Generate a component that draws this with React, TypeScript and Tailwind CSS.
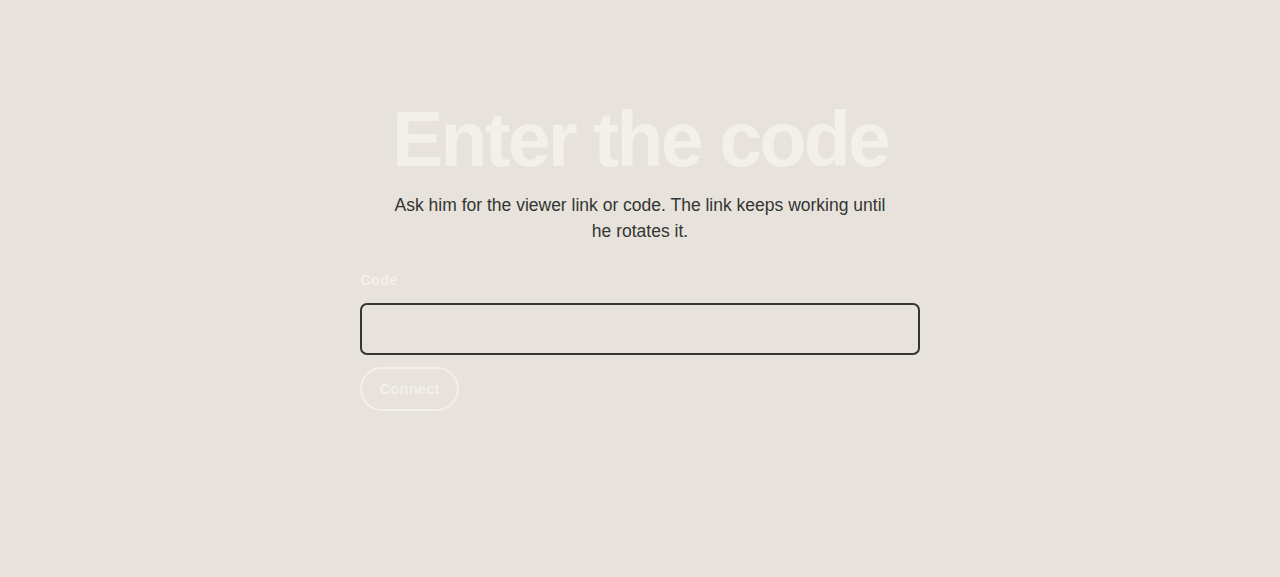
import React from "react";

export default function App() {
  return (
    <div className="min-h-[577px] w-full bg-[#e7e2db] flex justify-center" style={{ fontFamily: '"Liberation Sans", Arial, sans-serif' }}>
      <div className="w-[560px] pt-[96px] flex flex-col">
        <h1 className="text-center text-[77px] leading-[86px] font-bold tracking-[-0.036em] text-[#f3efea]">Enter the code</h1>
        <p className="mx-auto mt-[10px] max-w-[500px] text-center text-[17.5px] leading-[26px] text-[#333632]">
          Ask him for the viewer link or code. The link keeps working until he rotates it.
        </p>
        <label className="mt-[26px] text-[15px] leading-[20px] font-bold text-[#f3efea]">Code</label>
        <input className="mt-[13px] h-[52px] w-full rounded-[7px] border-2 border-[#333632] bg-transparent px-3 outline-none" />
        <div className="mt-[12px]">
          <button className="h-[44px] w-[99px] rounded-full border-2 border-[#f3efea] text-[15px] font-bold text-[#f3efea]">Connect</button>
        </div>
      </div>
    </div>
  );
}
